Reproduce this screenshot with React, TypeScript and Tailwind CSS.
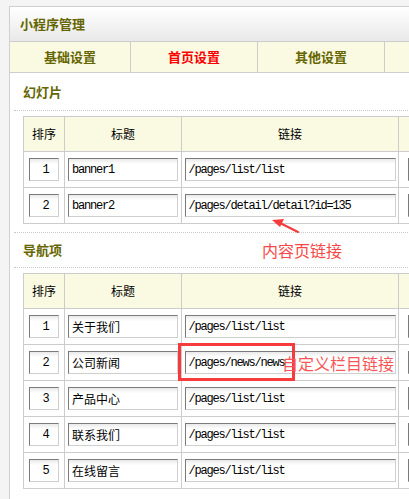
import React from "react";

const font = { fontFamily: '"Noto Sans CJK SC", "Liberation Sans", sans-serif' };

interface Row {
  sort: string;
  title: string;
  link: string;
  latinTitle?: boolean;
}

const slides: Row[] = [
  { sort: "1", title: "banner1", link: "/pages/list/list", latinTitle: true },
  { sort: "2", title: "banner2", link: "/pages/detail/detail?id=135", latinTitle: true },
];

const navs: Row[] = [
  { sort: "1", title: "关于我们", link: "/pages/list/list" },
  { sort: "2", title: "公司新闻", link: "/pages/news/news" },
  { sort: "3", title: "产品中心", link: "/pages/list/list" },
  { sort: "4", title: "联系我们", link: "/pages/list/list" },
  { sort: "5", title: "在线留言", link: "/pages/list/list" },
];

function Field({ value, w, mono, center }: { value: string; w: string; mono?: boolean; center?: boolean }) {
  return (
    <input
      readOnly
      value={value}
      className={`${w} h-[23px] border border-t-[#7a7a7a] border-l-[#7a7a7a] border-r-[#cfcfcf] border-b-[#cfcfcf] bg-[linear-gradient(#e9e9e9,#ffffff_5px)] pl-[3px] text-[12px] text-black outline-none ${
        center ? "text-center" : ""
      } ${mono ? "font-['Liberation_Mono','Noto_Sans_CJK_SC',monospace] tracking-[-1.2px]" : "font-['Noto_Sans_CJK_SC',sans-serif]"}`}
    />
  );
}

function DataTable({ rows }: { rows: Row[] }) {
  return (
    <div className="ml-[9px] mt-[5px] w-[600px] border-l border-t border-[#cccccc]">
      <div className="flex h-[35px] bg-[#fafae3] text-[12px] text-black">
        <div className="flex w-[41px] items-center justify-center border-b border-r border-[#cccccc]">排序</div>
        <div className="flex w-[117px] items-center justify-center border-b border-r border-[#cccccc]">标题</div>
        <div className="flex w-[217px] items-center justify-center border-b border-r border-[#cccccc]">链接</div>
        <div className="flex-1 border-b border-r border-[#cccccc]"></div>
      </div>
      {rows.map((r) => (
        <div key={r.sort + r.title} className="flex h-[36px]">
          <div className="flex w-[41px] items-center justify-center border-b border-r border-[#cccccc]">
            <Field value={r.sort} w="w-[30px]" center mono />
          </div>
          <div className="flex w-[117px] items-center justify-center border-b border-r border-[#cccccc]">
            <Field value={r.title} w="w-[110px]" mono={r.latinTitle} />
          </div>
          <div className="flex w-[217px] items-center justify-center border-b border-r border-[#cccccc]">
            <Field value={r.link} w="w-[211px]" mono />
          </div>
          <div className="flex flex-1 items-center border-b border-r border-[#cccccc] pl-[9px]">
            <Field value="" w="w-[160px]" />
          </div>
        </div>
      ))}
    </div>
  );
}

export default function App() {
  return (
    <div className="relative h-[499px] w-[409px] overflow-hidden bg-[#f4f4f4] pl-[9px] pt-[6px]" style={font}>
      <div className="h-[600px] w-[700px] border border-[#d0d0d0] bg-white">
        <div className="flex h-[35px] items-center border-b border-[#cccccc] bg-[linear-gradient(#ffffff,#e9e9e9)] pl-[10px] text-[13px] font-bold text-[#666600]">
          小程序管理
        </div>
        <div className="flex h-[31px] border-b border-[#cccccc] bg-[#fafae3] text-[13px] font-bold text-[#666600]">
          <div className="flex w-[121px] items-center justify-center border-r border-[#cccccc]">基础设置</div>
          <div className="flex w-[127px] items-center justify-center border-r border-[#cccccc] text-[#ff0000]">首页设置</div>
          <div className="flex w-[127px] items-center justify-center border-r border-[#cccccc]">其他设置</div>
          <div className="flex-1"></div>
        </div>

        <div className="ml-[4px]">
          <div className="flex h-[38px] items-center border-b border-dotted border-[#c8c8c8] pl-[9px] text-[13px] font-bold text-[#666600]">
            幻灯片
          </div>
          <div className="border-b border-dotted border-[#c8c8c8] pb-[8px]">
            <DataTable rows={slides} />
          </div>
          <div className="flex h-[35px] items-center border-b border-dotted border-[#c8c8c8] pl-[9px] text-[13px] font-bold text-[#666600]">
            导航项
          </div>
          <DataTable rows={navs} />
        </div>
      </div>

      {/* annotations */}
      <svg className="absolute left-[266px] top-[214px]" width="40" height="24" viewBox="0 0 40 24">
        <path d="M32 18 L14 9" stroke="#f53b3b" strokeWidth="2" strokeLinecap="round" />
        <path d="M6 6 L18 5 L14 13 Z" fill="#f53b3b" />
      </svg>
      <div className="absolute left-[262px] top-[239px] text-[16px] leading-[22px] text-[#f64848]">内容页链接</div>
      <div className="absolute left-[178px] top-[343px] h-[38px] w-[117px] border-[3px] border-[#f53b3b]"></div>
      <div className="absolute left-[282px] top-[352px] text-[16px] leading-[22px] text-[#f85656]">自定义栏目链接</div>
    </div>
  );
}
